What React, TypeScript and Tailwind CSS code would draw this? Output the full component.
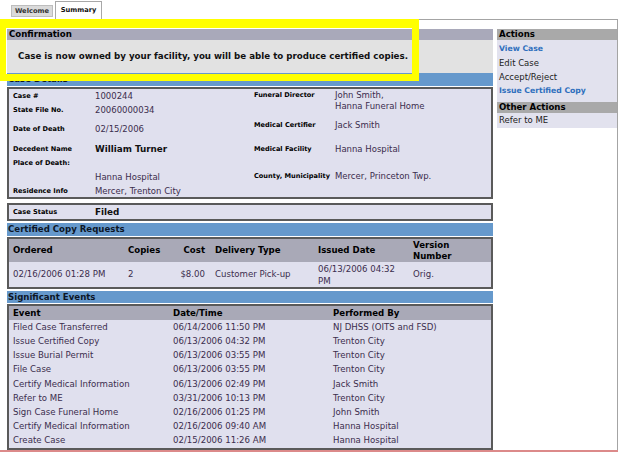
import React from "react";

const events: [string, string, string][] = [
  ["Filed Case Transferred", "06/14/2006 11:50 PM", "NJ DHSS (OITS and FSD)"],
  ["Issue Certified Copy", "06/13/2006 04:32 PM", "Trenton City"],
  ["Issue Burial Permit", "06/13/2006 03:55 PM", "Trenton City"],
  ["File Case", "06/13/2006 03:55 PM", "Trenton City"],
  ["Certify Medical Information", "06/13/2006 02:49 PM", "Jack Smith"],
  ["Refer to ME", "03/31/2006 10:13 PM", "Trenton City"],
  ["Sign Case Funeral Home", "02/16/2006 01:25 PM", "John Smith"],
  ["Certify Medical Information", "02/16/2006 09:40 AM", "Hanna Hospital"],
  ["Create Case", "02/15/2006 11:26 AM", "Hanna Hospital"],
];

function BlueHeader({ title, className }: { title: string; className: string }) {
  return (
    <div className={`flex items-center bg-[#6699cc] text-[8.6px] font-bold text-[#0d1626] pl-[1px] ${className}`}>
      {title}
    </div>
  );
}

export default function App() {
  return (
    <div className="relative w-[620px] h-[456px] bg-white overflow-hidden font-['DejaVu_Sans',sans-serif] leading-none text-black">
      {/* Tabs */}
      <div className="flex items-end h-[19px] pl-[11px] gap-[2px]">
        <div className="mb-[2px] flex h-[12px] w-[42px] items-center justify-center border border-[#bdbdbd] bg-[#dadada] text-[6.7px] font-bold text-[#333]">
          Welcome
        </div>
        <div className="flex h-[18px] w-[47px] items-center justify-center border border-b-0 border-[#a8a8a8] bg-white text-[6.7px] font-bold text-[#111]">
          Summary
        </div>
      </div>

      {/* Main area */}
      <div className="flex h-[431px] w-[618px] border-t border-r border-[#a4a4a4] pl-[7px] pt-[9px] gap-[4px]">
        {/* Left column */}
        <div className="flex w-[486px] flex-col">
          <div className="flex h-[11px] items-center bg-[#a9a9ba] pl-[2px] text-[8.6px] font-bold">Confirmation</div>
          <div className="flex h-[33px] items-center bg-[#e2e2e2] pl-[11px] text-[8.7px] font-bold text-[#111]">
            Case is now owned by your facility, you will be able to produce certified copies.
          </div>
          <BlueHeader title="Case Details" className="h-[13px]" />

          {/* Case details box */}
          <div className="mt-[1px] flex h-[112px] border-2 border-[#5a5a5a] bg-[#e0e0ee]">
            <div className="flex w-[245px] flex-col pl-[4px]">
              <div className="flex h-[14px] items-center">
                <span className="w-[82px] text-[6.6px] font-bold">Case #</span>
                <span className="text-[8.5px] text-[#3b2d4d]">1000244</span>
              </div>
              <div className="flex h-[14px] items-center">
                <span className="w-[82px] text-[6.6px] font-bold">State File No.</span>
                <span className="text-[8.5px] text-[#3b2d4d]">20060000034</span>
              </div>
              <div className="flex h-[24px] items-center">
                <span className="w-[82px] text-[6.6px] font-bold">Date of Death</span>
                <span className="text-[8.5px] text-[#3b2d4d]">02/15/2006</span>
              </div>
              <div className="flex h-[16px] items-center">
                <span className="w-[82px] text-[6.6px] font-bold">Decedent Name</span>
                <span className="text-[8.8px] font-bold text-[#111]">William Turner</span>
              </div>
              <div className="flex h-[13px] items-center">
                <span className="w-[82px] text-[6.6px] font-bold">Place of Death:</span>
              </div>
              <div className="flex h-[15px] items-center">
                <span className="w-[82px]"></span>
                <span className="text-[8.5px] text-[#3b2d4d]">Hanna Hospital</span>
              </div>
              <div className="flex h-[12px] items-center">
                <span className="w-[82px] text-[6.6px] font-bold">Residence Info</span>
                <span className="text-[8.5px] text-[#3b2d4d]">Mercer, Trenton City</span>
              </div>
            </div>
            <div className="flex flex-1 flex-col">
              <div className="flex h-[23px] items-start pt-[1px] leading-[11px]">
                <span className="w-[81px] text-[6.6px] font-bold leading-[11px]">Funeral Director</span>
                <span className="text-[8.5px] leading-[11px] text-[#3b2d4d]">
                  John Smith,
                  <br />
                  Hanna Funeral Home
                </span>
              </div>
              <div className="flex h-[26px] items-center">
                <span className="w-[81px] text-[6.6px] font-bold">Medical Certifier</span>
                <span className="text-[8.5px] text-[#3b2d4d]">Jack Smith</span>
              </div>
              <div className="flex h-[22px] items-center">
                <span className="w-[81px] text-[6.6px] font-bold">Medical Facility</span>
                <span className="text-[8.5px] text-[#3b2d4d]">Hanna Hospital</span>
              </div>
              <div className="flex h-[32px] items-center">
                <span className="w-[81px] text-[6.6px] font-bold">County, Municipality</span>
                <span className="text-[8.5px] text-[#3b2d4d]">Mercer, Princeton Twp.</span>
              </div>
            </div>
          </div>

          {/* Case status */}
          <div className="mt-[4px] flex h-[18px] items-center border-2 border-[#5a5a5a] bg-[#e0e0ee] pl-[4px]">
            <span className="w-[82px] text-[6.6px] font-bold">Case Status</span>
            <span className="text-[8.8px] font-bold text-[#111]">Filed</span>
          </div>

          <BlueHeader title="Certified Copy Requests" className="mt-[2px] h-[13px]" />

          {/* Certified copy table */}
          <div className="mt-[1px] flex h-[52px] flex-col border-2 border-[#5a5a5a] bg-[#e0e0ee]">
            <div className="grid h-[23px] grid-cols-[115px_53px_33px_104px_95px_1fr] items-center bg-[#a9a9b7] text-[8.6px] font-bold">
              <div className="pl-[4px]">Ordered</div>
              <div className="pl-[4px]">Copies</div>
              <div className="pr-[5px] text-right">Cost</div>
              <div className="pl-[5px]">Delivery Type</div>
              <div className="pl-[4px]">Issued Date</div>
              <div className="pl-[4px] leading-[11px]">
                Version
                <br />
                Number
              </div>
            </div>
            <div className="grid h-[25px] grid-cols-[115px_53px_33px_104px_95px_1fr] items-center text-[8.6px] text-[#3b2d4d]">
              <div className="pl-[4px]">02/16/2006 01:28 PM</div>
              <div className="pl-[4px]">2</div>
              <div className="pr-[5px] text-right">$8.00</div>
              <div className="pl-[5px]">Customer Pick-up</div>
              <div className="pl-[4px] leading-[12px]">
                06/13/2006 04:32
                <br />
                PM
              </div>
              <div className="pl-[4px]">Orig.</div>
            </div>
          </div>

          <BlueHeader title="Significant Events" className="mt-[2px] h-[12px]" />

          {/* Events table */}
          <div className="mt-[1px] flex h-[146px] flex-col border-2 border-[#5a5a5a] bg-[#e0e0ee]">
            <div className="grid h-[14px] grid-cols-[160px_160px_1fr] items-center bg-[#a9a9b7] text-[8.6px] font-bold">
              <div className="pl-[4px]">Event</div>
              <div className="pl-[4px]">Date/Time</div>
              <div className="pl-[4px]">Performed By</div>
            </div>
            {events.map((e, i) => (
              <div key={i} className="grid h-[14.2px] grid-cols-[160px_160px_1fr] items-center text-[8.6px] text-[#3b2d4d]">
                <div className="pl-[4px]">{e[0]}</div>
                <div className="pl-[4px]">{e[1]}</div>
                <div className="pl-[4px]">{e[2]}</div>
              </div>
            ))}
          </div>
        </div>

        {/* Right column */}
        <div className="flex w-[120px] flex-col">
          <div className="flex h-[11px] items-center bg-[#a9a9a9] pl-[2px] text-[8.6px] font-bold">Actions</div>
          <div className="flex flex-col bg-[#e2e2ee] pl-[2px] pt-[2px] pb-[4px]">
            <div className="flex h-[14px] items-center text-[7.7px] font-bold text-[#2e6fbd]">View Case</div>
            <div className="flex h-[14px] items-center text-[8.5px] text-[#222]">Edit Case</div>
            <div className="flex h-[14px] items-center text-[8.5px] text-[#222]">Accept/Reject</div>
            <div className="flex h-[14px] items-center text-[7.7px] font-bold text-[#2e6fbd]">Issue Certified Copy</div>
          </div>
          <div className="flex h-[11px] items-center bg-[#a9a9a9] pl-[2px] text-[8.6px] font-bold">Other Actions</div>
          <div className="flex h-[15px] items-center bg-[#e2e2ee] pl-[2px] text-[8.5px] text-[#222]">Refer to ME</div>
        </div>
      </div>

      {/* bottom edge */}
      <div className="h-[2px] w-[618px] bg-[#dc8a8a]" />

      {/* Yellow highlight annotation */}
      <div className="absolute left-0 top-[19px] h-[62px] w-[419px] border-t-[9px] border-l-[6px] border-r-[7px] border-b-[7px] border-[#ffff00]" />
    </div>
  );
}
